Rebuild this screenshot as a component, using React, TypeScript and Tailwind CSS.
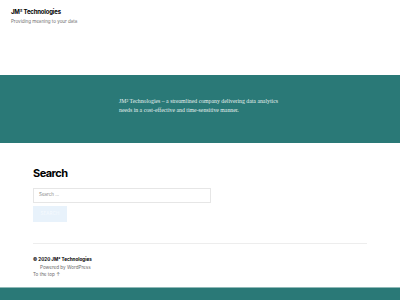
import React from "react";

const sans = { fontFamily: "Inter, 'Liberation Sans', sans-serif" };

export default function App() {
  return (
    <div className="w-[400px] h-[300px] overflow-hidden bg-white flex flex-col font-[Inter,'Liberation_Sans',sans-serif]">
      {/* Header */}
      <header className="h-[75px] px-[11px] pt-[7px]">
        <div className="text-[6px] leading-[9px] font-bold tracking-[-0.03em] text-black">
          JM² Technologies
        </div>
        <div className="mt-[2px] text-[4.5px] leading-[7px] text-[#6d6d6d]">
          Providing meaning to your data
        </div>
      </header>

      {/* Hero band */}
      <section className="h-[68px] bg-[#2a7977] flex justify-center pt-[22px]">
        <p className="w-[166px] pl-[2px] text-[5.8px] leading-[9px] text-[#e6f0ef] font-['Liberation_Serif',serif]">
          JM² Technologies – a streamlined company delivering data analytics needs in a cost-effective and time-sensitive manner.
        </p>
      </section>

      {/* Search */}
      <main className="px-[33px] pt-[23px]">
        <h2 className="text-[11px] leading-[14px] font-bold tracking-[-0.05em] text-black">Search</h2>
        <div className="mt-[8px] w-[178px] h-[15px] border border-[#e6e6e6] flex items-center px-[5px]">
          <span className="text-[4.5px] text-[#8a8a8a]">Search ...</span>
        </div>
        <button className="mt-[3px] w-[34px] h-[16px] bg-[#e8f2fb] text-[4.5px] tracking-[0.03em] text-[#f6faff] flex items-center justify-center">
          SEARCH
        </button>
        <div className="mt-[21px] w-[334px] h-px bg-[#ededed]" />
      </main>

      {/* Footer */}
      <footer className="px-[33px] pt-[12px] flex-1 flex flex-col text-[4.6px] leading-[7.5px]" style={sans}>
        <div className="font-bold text-black">© 2020 JM² Technologies</div>
        <div className="pl-[7px] text-[#6d6d6d]">Powered by WordPress</div>
        <div className="text-[#6d6d6d]">To the top ↑</div>
      </footer>
      <div className="h-[13px] bg-[#2a7977] border-t border-[#8fb9b7]" />
    </div>
  );
}
